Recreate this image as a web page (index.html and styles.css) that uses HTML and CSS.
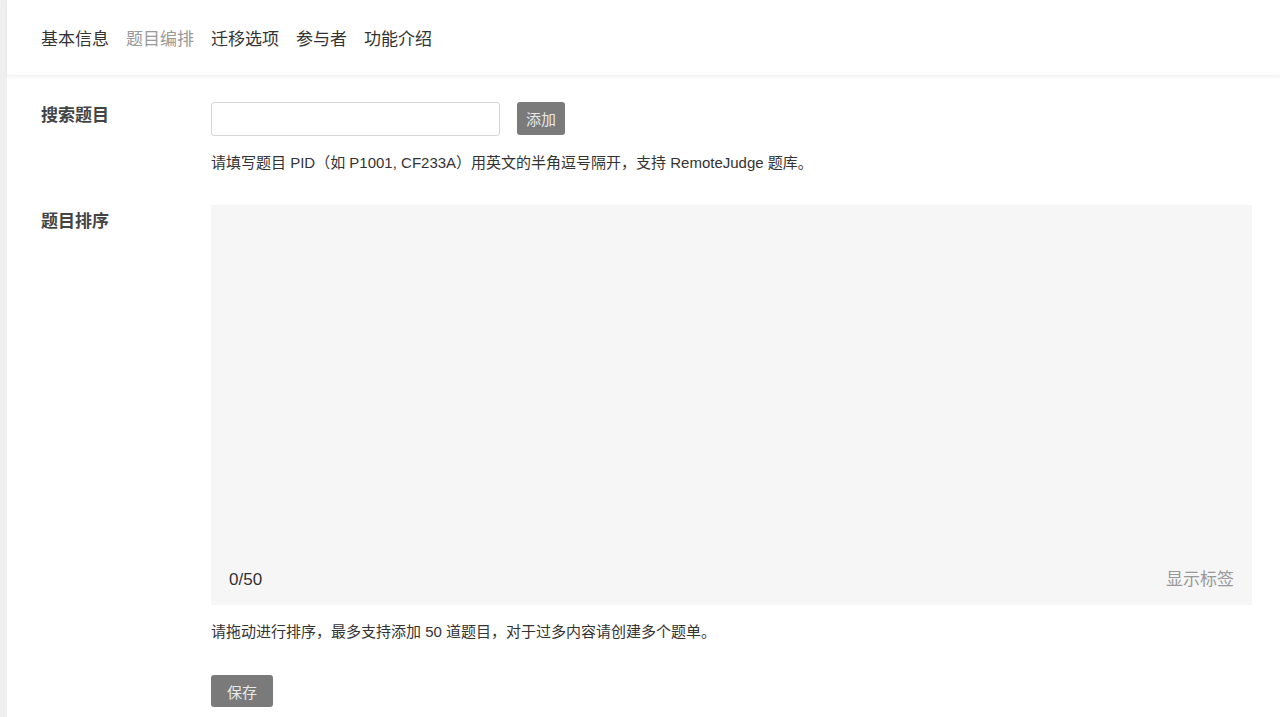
FILE: index.html
```html
<!DOCTYPE html>
<html>
<head>
  <title>题目编排</title>
  <link rel="stylesheet" href="styles.css">
</head>
<body>
  <div class="page">
    <div class="tabs">
      <a class="tab">基本信息</a>
      <a class="tab active">题目编排</a>
      <a class="tab">迁移选项</a>
      <a class="tab">参与者</a>
      <a class="tab">功能介绍</a>
    </div>

    <div class="content">
      <div class="field">
        <div class="label">搜索题目</div>
        <div class="control">
          <div class="search-row">
            <input type="text" class="search-input">
            <button class="btn">添加</button>
          </div>
          <div class="help">请填写题目 PID（如 P1001, CF233A）用英文的半角逗号隔开，支持 RemoteJudge 题库。</div>
        </div>
      </div>

      <div class="field sort-field">
        <div class="label">题目排序</div>
        <div class="control">
          <div class="sort-box">
            <span class="count">0/50</span>
            <span class="show-tags">显示标签</span>
          </div>
          <div class="help">请拖动进行排序，最多支持添加 50 道题目，对于过多内容请创建多个题单。</div>
          <button class="btn save-btn">保存</button>
        </div>
      </div>
    </div>
  </div>
</body>
</html>
```

FILE: styles.css
```css
/* Main Styles */
body {
  font-family: "Liberation Sans", "Noto Sans CJK SC", sans-serif;
  margin: 0;
  padding: 0;
  background-color: #fff;
  color: #333;
}

.page {
  border-left: 7px solid #efefef;
  min-height: 717px;
  box-sizing: border-box;
}

/* Tabs */
.tabs {
  display: flex;
  gap: 17px;
  height: 75px;
  align-items: center;
  padding-left: 34px;
  box-shadow: 0 1px 3px rgba(0, 0, 0, 0.06);
  border-bottom: 1px solid #f2f2f2;
}

.tab {
  font-size: 17px;
  color: #333;
  cursor: pointer;
}

.tab.active {
  color: #999;
}

/* Form Fields */
.content {
  padding: 26px 28px 0 34px;
}

.field {
  display: flex;
}

.label {
  width: 170px;
  font-size: 17px;
  font-weight: bold;
  color: #444;
  line-height: 28px;
}

.sort-field .label {
  padding-top: 3px;
}

.control {
  flex: 1;
}

.search-row {
  display: flex;
  gap: 17px;
}

.search-input {
  width: 289px;
  height: 34px;
  box-sizing: border-box;
  border: 1px solid #d6d6d6;
  border-radius: 3px;
  padding: 0 8px;
}

.btn {
  background-color: #7a7a7a;
  color: #e8e8e8;
  border: none;
  border-radius: 3px;
  font-family: inherit;
  font-size: 15px;
  height: 33px;
  padding: 0 9px;
  cursor: pointer;
}

.help {
  font-size: 15px;
  color: #333;
  margin-top: 16px;
  line-height: 22px;
}

.sort-field {
  margin-top: 31px;
}

.sort-box {
  height: 400px;
  background-color: #f6f6f6;
  display: flex;
  justify-content: space-between;
  align-items: flex-end;
  padding: 0 18px 15px 18px;
  box-sizing: border-box;
}

.count {
  font-size: 17px;
  color: #333;
}

.show-tags {
  font-size: 17px;
  color: #999;
}

.sort-field .help {
  margin-top: 16px;
}

.save-btn {
  margin-top: 32px;
  height: 32px;
  padding: 0 16px;
}
```
